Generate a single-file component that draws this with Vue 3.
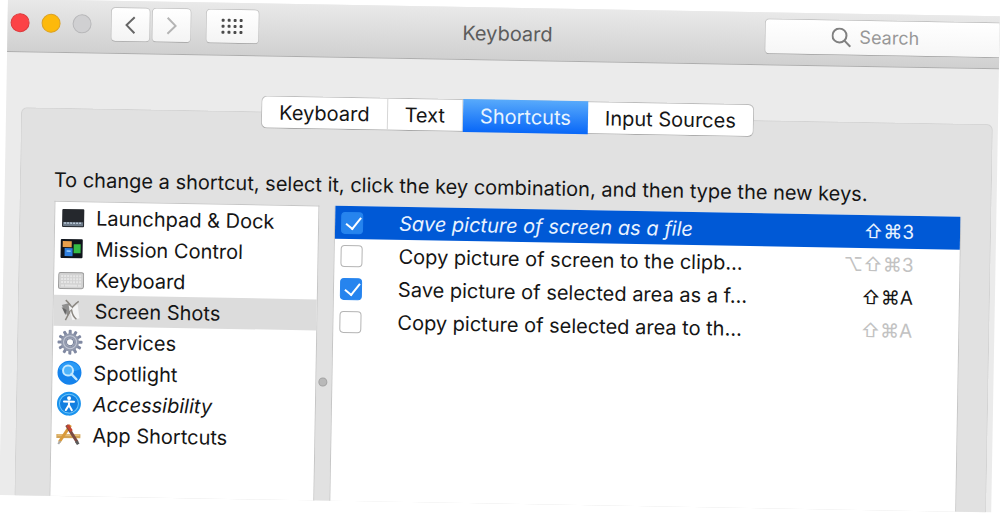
<script setup>
import { ref } from 'vue'

const tabs = ['Keyboard', 'Text', 'Shortcuts', 'Input Sources']
const activeTab = ref('Shortcuts')

const categories = [
  { id: 'dock', name: 'Launchpad & Dock' },
  { id: 'mission', name: 'Mission Control' },
  { id: 'keyboard', name: 'Keyboard' },
  { id: 'shots', name: 'Screen Shots' },
  { id: 'services', name: 'Services' },
  { id: 'spotlight', name: 'Spotlight' },
  { id: 'access', name: 'Accessibility', italic: true },
  { id: 'apps', name: 'App Shortcuts' }
]
const activeCategory = ref('shots')

const shortcuts = ref([
  { id: 's1', name: 'Save picture of screen as a file', keys: '⇧⌘3', on: true, selected: true },
  { id: 's2', name: 'Copy picture of screen to the clipb...', keys: '⌥⇧⌘3', on: false },
  { id: 's3', name: 'Save picture of selected area as a f...', keys: '⇧⌘A', on: true },
  { id: 's4', name: 'Copy picture of selected area to th...', keys: '⇧⌘A', on: false }
])

const teeth = Array.from({ length: 12 }, (_, i) => i * 30)
</script>

<template>
  <div class="stage">
    <main class="window">
      <header class="toolbar">
        <div class="controls">
          <button class="light red" aria-label="Close"></button>
          <button class="light yellow" aria-label="Minimize"></button>
          <button class="light off" aria-label="Zoom"></button>
          <div class="nav">
            <button class="tool" aria-label="Back">
              <svg width="14" height="20" viewBox="0 0 14 20"><path d="M11 2 3 10l8 8" fill="none" stroke="#666" stroke-width="2" /></svg>
            </button>
            <button class="tool" aria-label="Forward">
              <svg width="14" height="20" viewBox="0 0 14 20"><path d="m3 2 8 8-8 8" fill="none" stroke="#b4b4b4" stroke-width="2" /></svg>
            </button>
          </div>
          <button class="tool wide" aria-label="Show all">
            <svg width="24" height="18" viewBox="0 0 24 18" fill="#4a4a4a">
              <template v-for="r in 3" :key="r">
                <rect v-for="c in 4" :key="c" :x="c * 6 - 5" :y="r * 6 - 5" width="3" height="3" rx="1" />
              </template>
            </svg>
          </button>
        </div>
        <h1 class="title">Keyboard</h1>
        <label class="search">
          <svg width="20" height="20" viewBox="0 0 20 20" fill="none" stroke="#808080" stroke-width="2"><circle cx="8" cy="8" r="7" /><path d="m13 13 6 6" /></svg>
          <input type="search" placeholder="Search" aria-label="Search" />
        </label>
      </header>

      <section class="panel">
        <div class="tabs" role="tablist">
          <button
            v-for="t in tabs"
            :key="t"
            role="tab"
            class="tab"
            :class="{ active: t === activeTab }"
            :aria-selected="t === activeTab"
            @click="activeTab = t"
          >{{ t }}</button>
        </div>

        <p class="hint">To change a shortcut, select it, click the key combination, and then type the new keys.</p>

        <div class="split">
          <ul class="categories">
            <li v-for="c in categories" :key="c.id">
              <button class="category" :class="{ current: c.id === activeCategory, italic: c.italic }" @click="activeCategory = c.id">
                <svg class="icon" width="26" height="26" viewBox="0 0 26 26">
                  <g v-if="c.id === 'dock'">
                    <rect x="3" y="4" width="22" height="18" rx="1" fill="#25282d" />
                    <rect x="4" y="17" width="20" height="4" fill="#6d7a88" />
                    <path d="M5 18h18" stroke="#b9c8d6" stroke-width="1.5" stroke-dasharray="2 1" />
                  </g>
                  <g v-else-if="c.id === 'mission'">
                    <rect x="2" y="3" width="22" height="19" rx="1" fill="#10151c" />
                    <rect x="4" y="5" width="9" height="6" fill="#e8a04c" />
                    <rect x="15" y="8" width="7" height="9" fill="#35bd45" />
                    <rect x="6" y="12" width="8" height="8" fill="#2e7fe0" />
                    <path d="M8 15h4" stroke="#9ad0ff" stroke-width="1.5" />
                  </g>
                  <g v-else-if="c.id === 'keyboard'">
                    <rect x="0.5" y="5.5" width="25" height="16" rx="2" fill="#d2d2d2" stroke="#9b9b9b" />
                    <path d="M3 9h20M3 12h20M3 15h20" stroke="#e6e6e6" stroke-width="2" stroke-dasharray="2 1" />
                    <path d="M3 18.5h3m1 0h12m1 0h3" stroke="#e4e4e4" stroke-width="2" />
                  </g>
                  <g v-else-if="c.id === 'shots'">
                    <path d="m4 7 8-2 4 5-6 8z" fill="#8f8f8f" />
                    <path d="m12 12 8-6 2 14-7 2z" fill="#f4f4f4" />
                    <path d="m4 9 5 3-1 5z" fill="#666" />
                    <path d="M8 2q5 4 6 10t5 9M21 3q-7 5-9 11l-4 8" fill="none" stroke="#8b8781" stroke-width="1.5" />
                    <path d="m11 7 4 3-3 3z" fill="#eee" />
                  </g>
                  <g v-else-if="c.id === 'services'">
                    <rect v-for="a in teeth" :key="a" x="11.5" y="0.5" width="3" height="6" rx="1" fill="#8089a2" :transform="`rotate(${a} 13 13)`" />
                    <circle cx="13" cy="13" r="6.5" fill="none" stroke="#9199ad" stroke-width="5" />
                    <circle cx="13" cy="13" r="6.5" fill="none" stroke="#c3c8d6" stroke-width="1" />
                    <circle cx="13" cy="13" r="3.5" fill="#fff" stroke="#747e98" />
                  </g>
                  <g v-else-if="c.id === 'spotlight'">
                    <circle cx="13" cy="12.5" r="12" fill="#1583ec" />
                    <path d="M2 9a12 12 0 0 1 22 0q-11 5-22 0" fill="#2b9bf6" />
                    <circle cx="11.5" cy="10.5" r="5" fill="#4fb3fb" stroke="#c4e8ff" stroke-width="2" />
                    <path d="m15 14 5 5" stroke="#c4e8ff" stroke-width="2.5" stroke-linecap="round" />
                  </g>
                  <g v-else-if="c.id === 'access'">
                    <circle cx="13" cy="12.5" r="12" fill="#1b93ee" />
                    <circle cx="13" cy="12.5" r="9.5" fill="#127fe0" stroke="#6cc4fa" />
                    <circle cx="13" cy="7" r="2" fill="#fff" />
                    <path d="M8 10.5h10M13 10v5M13 14l-3 5M13 14l3 5" fill="none" stroke="#fff" stroke-width="2" stroke-linecap="round" />
                  </g>
                  <g v-else>
                    <path d="M1 14h24" stroke="#d3a457" stroke-width="4" />
                    <path d="M2 13h22" stroke="#f0cd8b" stroke-width="1" />
                    <path d="M15 3 4 20" stroke="#d99a3a" stroke-width="3" />
                    <path d="m5 19-2 3" stroke="#a8a8a8" stroke-width="2" />
                    <path d="m11 3 11 17" stroke="#7a4a42" stroke-width="3" />
                    <path d="m12 3 4 6" stroke="#c44632" stroke-width="3" />
                    <path d="m21 19 2 3" stroke="#5b5b5b" stroke-width="3" />
                  </g>
                </svg>
                <span>{{ c.name }}</span>
              </button>
            </li>
          </ul>

          <div class="splitter"><span class="grip"></span></div>

          <div class="list">
            <table>
              <tbody>
                <tr v-for="s in shortcuts" :key="s.id" :class="{ selected: s.selected, disabled: !s.on }">
                  <td class="check"><input :id="s.id" v-model="s.on" type="checkbox" /></td>
                  <td class="name"><label :for="s.id">{{ s.name }}</label></td>
                  <td class="keys">{{ s.keys }}</td>
                </tr>
              </tbody>
            </table>
          </div>
        </div>
      </section>
    </main>
  </div>
</template>

<style>
body {
  margin: 0;
  background: #fff;
}
</style>

<style scoped>
* {
  box-sizing: border-box;
}
button,
input {
  font: inherit;
  color: inherit;
  margin: 0;
}
.stage {
  height: 100vh;
  overflow: hidden;
  font-family: Inter, Roboto, "Liberation Sans", sans-serif;
  font-size: 20px;
  line-height: 24px;
  color: #151515;
}
.window {
  display: flex;
  flex-direction: column;
  height: calc(100vh - 17px);
  margin: -1px 0 0 8px;
  background: #ebebeb;
  transform: rotate(1deg);
  transform-origin: 0 0;
}
.toolbar {
  display: grid;
  grid-template-columns: 1fr auto 1fr;
  align-items: start;
  height: 53px;
  flex: none;
  padding-top: 6px;
  border-bottom: 1px solid #adadad;
  background: linear-gradient(#e9e9e9, #d0d0d0);
}
.controls {
  display: flex;
  align-items: center;
  padding-left: 3px;
}
.light {
  width: 19px;
  height: 19px;
  margin-right: 12px;
  padding: 0;
  border: 1px solid;
  border-radius: 50%;
}
.red {
  background: #fc4346;
  border-color: #dc3a3c;
}
.yellow {
  background: #fdb90b;
  border-color: #dba123;
}
.off {
  background: #d0d0d2;
  border-color: #b8b8ba;
}
.nav {
  display: flex;
  gap: 1px;
  margin: 0 14px 0 7px;
}
.tool {
  display: flex;
  align-items: center;
  justify-content: center;
  width: 40px;
  height: 35px;
  padding: 0;
  border: 1px solid #c6c6c6;
  border-bottom-color: #acacac;
  border-radius: 5px;
  background: linear-gradient(#fff, #f4f4f4);
}
.wide {
  width: 54px;
}
.title {
  margin: 0;
  padding: 8px 0 0 8px;
  font-size: 20px;
  font-weight: 400;
  color: #5c5c5c;
}
.search {
  display: flex;
  align-items: center;
  gap: 8px;
  justify-self: end;
  width: 235px;
  height: 36px;
  padding-left: 66px;
  border: 1px solid #c4c4c4;
  border-right: 0;
  border-bottom-color: #acacac;
  border-radius: 5px 0 0 5px;
  background: linear-gradient(#fff, #f6f6f6);
  font-size: 18px;
}
.search input {
  width: 100px;
  padding: 0;
  border: 0;
  outline: 0;
  background: none;
}
.search input::placeholder {
  color: #979797;
  opacity: 1;
}
.panel {
  display: flex;
  flex: 1;
  flex-direction: column;
  min-height: 0;
  margin: 55px 5px 0 15px;
  padding: 0 29px 0 34px;
  border: 1px solid #d3d3d3;
  border-bottom: 0;
  border-radius: 6px 6px 0 0;
  background: #e1e1e1;
}
.tabs {
  display: flex;
  align-self: center;
  flex: none;
  height: 33px;
  margin: -17px 4px 0 0;
  border: 1px solid #bdbdbd;
  border-bottom-color: #a8a8a8;
  border-radius: 6px;
  background: #fff;
}
.tab {
  padding: 0 17px;
  border: 0;
  border-right: 1px solid #d6d6d6;
  background: none;
}
.tab:last-child {
  border-right: 0;
}
.tab.active {
  margin: -1px 0;
  border: 0;
  color: #e8f4ff;
  background: linear-gradient(#58aafb, #0867f8);
}
.hint {
  flex: none;
  margin: 43px 0 9px -1px;
  white-space: nowrap;
}
.split {
  display: flex;
  flex: 1;
  min-height: 0;
}
.categories {
  flex: none;
  width: 265px;
  margin: 0;
  padding: 0;
  list-style: none;
  border: 1px solid #c6c6c6;
  border-bottom: 0;
  background: #fff;
}
.category {
  display: flex;
  align-items: center;
  gap: 11px;
  width: 100%;
  height: 31px;
  padding: 0 0 0 4px;
  border: 0;
  background: none;
  text-align: left;
}
.current {
  background: #dcdcdc;
}
.italic {
  font-style: italic;
}
.splitter {
  display: flex;
  justify-content: center;
  width: 15px;
  flex: none;
  padding-top: 172px;
}
.grip {
  width: 9px;
  height: 9px;
  margin-right: 2px;
  border: 1px solid #a3a3a3;
  border-radius: 50%;
  background: #b9b9b9;
}
.list {
  flex: 1;
  border: 1px solid #c6c6c6;
  border-width: 0 1px;
  background: #fff;
}
table,
tbody {
  display: block;
}
tr {
  display: flex;
  align-items: center;
  height: 33px;
}
td {
  padding: 0;
}
.selected {
  color: #e9f3ff;
  background: #0059d6;
}
.selected .name {
  font-style: italic;
}
.check {
  flex: none;
  width: 64px;
  padding-left: 6px;
}
.check input {
  display: block;
  width: 22px;
  height: 22px;
  appearance: none;
  border: 1px solid #b4b4b4;
  border-radius: 4px;
  background: #fff;
}
.check input:checked {
  border-color: #2684ee;
  background: #2684ee;
}
.check input:checked::after {
  content: "";
  display: block;
  width: 7px;
  height: 13px;
  margin: 1px 0 0 7px;
  border: solid #fff;
  border-width: 0 2px 2px 0;
  transform: rotate(38deg);
}
.name {
  flex: 1;
  white-space: nowrap;
}
.keys {
  padding-right: 46px;
  font-size: 19px;
}
.disabled .keys {
  color: #c2c2c2;
}
</style>
